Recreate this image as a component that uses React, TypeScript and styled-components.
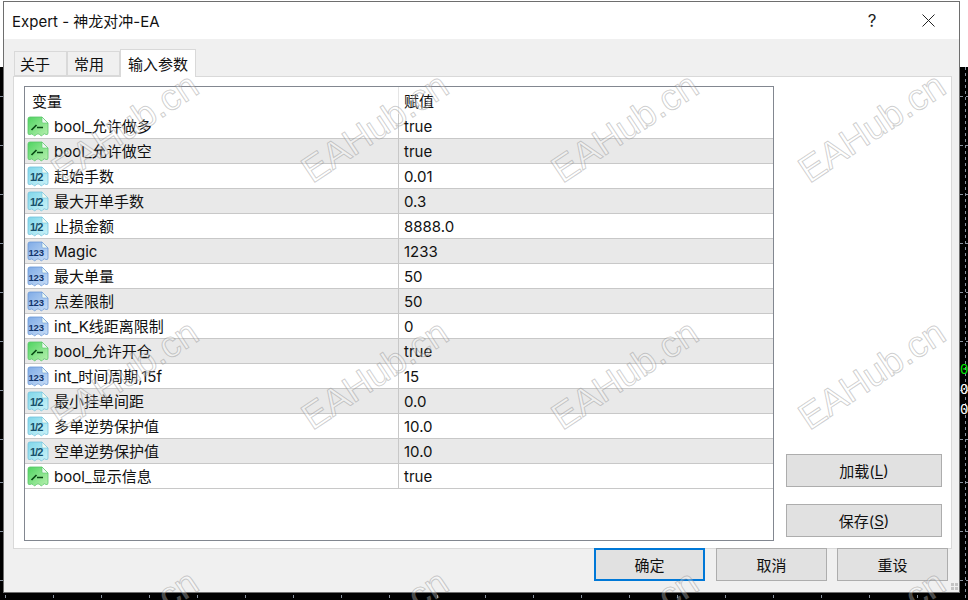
import React from "react";
import styled, { createGlobalStyle } from "styled-components";

const UI_FONT = `Inter, "Noto Sans CJK SC", sans-serif`;

const GlobalStyle = createGlobalStyle`
  html, body {
    margin: 0;
    padding: 0;
    width: 968px;
    height: 600px;
    overflow: hidden;
    background: #000;
  }
  * {
    box-sizing: border-box;
  }
`;

const Desktop = styled.div`
  position: relative;
  width: 968px;
  height: 600px;
  padding: 1px 8px 7px 3px;
  display: flex;
  overflow: hidden;
  background: linear-gradient(#fff 0 67px, #000 67px);
  font-family: ${UI_FONT};
`;

const ChartLayer = styled.svg`
  position: absolute;
  left: 0;
  top: 67px;
`;

const ChartLabel = styled.div<{ $color: string; $top: number }>`
  position: absolute;
  left: 960px;
  top: ${(p) => p.$top}px;
  color: ${(p) => p.$color};
  font: 14px "Liberation Mono", monospace;
  line-height: 16px;
`;

const Window = styled.div`
  position: relative;
  flex: 1;
  display: flex;
  flex-direction: column;
  background: #f0f0f0;
  border: 1px solid #6e6e6e;
`;

const TitleBar = styled.div`
  height: 37px;
  flex: none;
  display: flex;
  align-items: center;
  padding-left: 8px;
  background: #fff;
  color: #111;
  font-size: 15px;
`;

const Title = styled.div`
  flex: 1;
`;

const TitleButton = styled.div`
  width: 58px;
  height: 37px;
  display: flex;
  align-items: center;
  justify-content: center;
  color: #222;
  font-size: 17px;
  &:last-child {
    padding-right: 3px;
  }
`;

const Body = styled.div`
  flex: 1;
  display: flex;
  flex-direction: column;
  padding: 10px 0 0 9px;
`;

const TabStrip = styled.div`
  height: 27px;
  flex: none;
  display: flex;
  align-items: flex-end;
  padding-left: 1px;
`;

const Tab = styled.div<{ $active?: boolean; $width: number; $inset: number }>`
  position: relative;
  width: ${(p) => p.$width}px;
  height: ${(p) => (p.$active ? 28 : 25)}px;
  margin-bottom: ${(p) => (p.$active ? -1 : 0)}px;
  display: flex;
  align-items: center;
  padding-left: ${(p) => p.$inset}px;
  background: ${(p) => (p.$active ? "#fff" : "#f0f0f0")};
  border: 1px solid #d9d9d9;
  border-bottom: ${(p) => (p.$active ? "none" : "1px solid #d9d9d9")};
  color: #111;
  font-size: 15px;
  z-index: ${(p) => (p.$active ? 1 : 0)};
`;

const Panel = styled.div`
  width: 939px;
  height: 473px;
  flex: none;
  display: flex;
  gap: 12px;
  padding: 9px 9px 7px 10px;
  background: #fff;
  border: 1px solid #d9d9d9;
`;

const Table = styled.div`
  width: 750px;
  flex: none;
  display: flex;
  flex-direction: column;
  border: 1px solid #828790;
`;

const Row = styled.div<{ $shaded?: boolean; $header?: boolean }>`
  height: ${(p) => (p.$header ? 27 : 25)}px;
  flex: none;
  display: grid;
  grid-template-columns: 374px 1fr;
  background: ${(p) => (p.$shaded ? "#e9e9e9" : "#fff")};
  border-bottom: ${(p) => (p.$header ? "none" : "1px solid #c8c8c8")};
  color: #111;
  font-size: 15px;
  line-height: 22px;
`;

const NameCell = styled.div<{ $header?: boolean }>`
  display: flex;
  align-items: center;
  gap: 5px;
  padding-left: ${(p) => (p.$header ? 7 : 2)}px;
  border-right: ${(p) => (p.$header ? "1px solid #e5e5e5" : "1px solid #c8c8c8")};
  white-space: nowrap;
`;

const CellText = styled.span`
  padding-top: 2px;
`;

const ValueCell = styled.div`
  display: flex;
  align-items: center;
  padding-left: 5px;
`;

const SideColumn = styled.div`
  flex: 1;
  display: flex;
  flex-direction: column;
  justify-content: flex-end;
  gap: 17px;
  padding-bottom: 4px;
`;

const Button = styled.div<{ $default?: boolean }>`
  height: 33px;
  display: flex;
  align-items: center;
  justify-content: center;
  background: #e1e1e1;
  border: ${(p) => (p.$default ? "2px solid #0078d7" : "1px solid #adadad")};
  color: #111;
  font-size: 15px;
  u {
    text-underline-offset: 2px;
  }
`;

const Footer = styled.div`
  display: flex;
  justify-content: flex-end;
  gap: 11px;
  margin-top: -1px;
  padding-right: 11px;
  ${Button} {
    width: 111px;
  }
  ${Button}:last-child {
    margin-left: -1px;
  }
`;

const Grip = styled.svg`
  position: absolute;
  right: 0;
  bottom: 1px;
`;

const WatermarkLayer = styled.div`
  position: absolute;
  left: 0;
  top: 0;
  width: 968px;
  height: 600px;
  overflow: hidden;
  pointer-events: none;
`;

const Watermark = styled.div`
  position: absolute;
  transform: translate(-50%, -50%) rotate(-33.5deg);
  font: 37px "Liberation Sans", sans-serif;
  white-space: nowrap;
  color: rgba(255, 255, 255, 0.3);
  -webkit-text-stroke: 1px rgba(120, 120, 120, 0.36);
`;

type Kind = "bool" | "double" | "int";

const ICON_COLORS: Record<Kind, [string, string, string]> = {
  bool: ["#4fd461", "#b9f0b0", "#58c468"],
  double: ["#7fd6ea", "#cdf3f8", "#74c2dc"],
  int: ["#7fabe6", "#c9def7", "#6a98d6"],
};

const TypeIcon: React.FC<{ kind: Kind }> = ({ kind }) => {
  const [fill, light, edge] = ICON_COLORS[kind];
  const id = `icon-${kind}`;
  return (
    <svg width="22" height="21" viewBox="0 0 22 21" style={{ flex: "none" }}>
      <defs>
        <linearGradient id={id} x1="0" y1="0" x2="1" y2="1">
          <stop offset="0" stopColor={fill} />
          <stop offset="1" stopColor={light} />
        </linearGradient>
      </defs>
      <path
        d="M1 3 Q1 1 3 1 H15 L21 7 V17 Q21 19 19 18.5 Q17.5 17 16 18.5 L14.5 20 L12.5 18.5 Q11 17 9.5 18.5 L7.5 20 L6 18.5 Q4.5 17.5 3 18.5 Q1 19 1 17 Z"
        fill={`url(#${id})`}
        stroke={edge}
        strokeWidth="0.8"
      />
      <path d="M15 1 V6 Q15 7 16 7 H21 Z" fill="#eef9f2" stroke={edge} strokeWidth="0.6" />
      {kind === "bool" && (
        <path d="M4.5 14 L9.5 9 M10 11.5 H16" fill="none" stroke="#0a4a16" strokeWidth="1.7" />
      )}
      {kind === "double" && (
        <text x="3" y="14.5" fontSize="11" fontWeight="700" fontFamily="Liberation Sans" fill="#17506b" letterSpacing="-1">
          1/2
        </text>
      )}
      {kind === "int" && (
        <text x="1.5" y="15" fontSize="9.5" fontWeight="700" fontFamily="Liberation Sans" fill="#12336b" letterSpacing="-0.2">
          123
        </text>
      )}
    </svg>
  );
};

const PARAMS: { kind: Kind; name: string; value: string }[] = [
  { kind: "bool", name: "bool_允许做多", value: "true" },
  { kind: "bool", name: "bool_允许做空", value: "true" },
  { kind: "double", name: "起始手数", value: "0.01" },
  { kind: "double", name: "最大开单手数", value: "0.3" },
  { kind: "double", name: "止损金额", value: "8888.0" },
  { kind: "int", name: "Magic", value: "1233" },
  { kind: "int", name: "最大单量", value: "50" },
  { kind: "int", name: "点差限制", value: "50" },
  { kind: "int", name: "int_K线距离限制", value: "0" },
  { kind: "bool", name: "bool_允许开仓", value: "true" },
  { kind: "int", name: "int_时间周期,15f", value: "15" },
  { kind: "double", name: "最小挂单间距", value: "0.0" },
  { kind: "double", name: "多单逆势保护值", value: "10.0" },
  { kind: "double", name: "空单逆势保护值", value: "10.0" },
  { kind: "bool", name: "bool_显示信息", value: "true" },
];

const MARKS: [number, number][] = [125, 375, 625, 872].flatMap((x) =>
  [128, 375, 625].map((y) => [x, y] as [number, number])
);

const ChartGrid: React.FC = () => (
  <ChartLayer width="968" height="533">
    {[5, 53, 101, 149, 197, 245, 293, 341, 389, 437, 485, 533, 581, 629, 677, 725, 773, 821, 869, 917, 965].map((x) => (
      <line key={x} x1={x + 0.5} y1="0" x2={x + 0.5} y2="533" stroke="#8a93a0" strokeDasharray="3 3" />
    ))}
    {[29, 78, 127, 176, 225, 274, 323, 372, 415, 464, 513].map((y) => (
      <line key={y} x1="0" y1={y + 0.5} x2="968" y2={y + 0.5} stroke="#8a93a0" strokeDasharray="3 3" />
    ))}
  </ChartLayer>
);

export default function App() {
  return (
    <Desktop>
      <GlobalStyle />
      <ChartGrid />
      <ChartLabel $color="#00e600" $top={362}>0</ChartLabel>
      <ChartLabel $color="#fff" $top={382}>0</ChartLabel>
      <ChartLabel $color="#fff" $top={402}>0</ChartLabel>
      <Window>
        <TitleBar>
          <Title>Expert - 神龙对冲-EA</Title>
          <TitleButton>?</TitleButton>
          <TitleButton>
            <svg width="13" height="13" viewBox="0 0 13 13">
              <path d="M0.5 0.5 L12.5 12.5 M12.5 0.5 L0.5 12.5" stroke="#222" strokeWidth="1" fill="none" />
            </svg>
          </TitleButton>
        </TitleBar>
        <Body>
          <TabStrip>
            <Tab $width={53} $inset={5}>关于</Tab>
            <Tab $width={53} $inset={6}>常用</Tab>
            <Tab $active $width={76} $inset={7}>输入参数</Tab>
          </TabStrip>
          <Panel>
            <Table>
              <Row $header>
                <NameCell $header><CellText>变量</CellText></NameCell>
                <ValueCell><CellText>赋值</CellText></ValueCell>
              </Row>
              {PARAMS.map((p, i) => (
                <Row key={p.name + i} $shaded={i % 2 === 1}>
                  <NameCell>
                    <TypeIcon kind={p.kind} />
                    <CellText>{p.name}</CellText>
                  </NameCell>
                  <ValueCell><CellText>{p.value}</CellText></ValueCell>
                </Row>
              ))}
            </Table>
            <SideColumn>
              <Button>加载(<u>L</u>)</Button>
              <Button>保存(<u>S</u>)</Button>
            </SideColumn>
          </Panel>
          <Footer>
            <Button $default>确定</Button>
            <Button>取消</Button>
            <Button>重设</Button>
          </Footer>
        </Body>
        <Grip width="8" height="8" viewBox="0 0 8 8">
          <path d="M0 0h3v3H0zM4 0h3v3H4zM0 4h3v3H0zM4 4h3v3H4z" fill="#c4c4c4" />
        </Grip>
      </Window>
      <WatermarkLayer>
        {MARKS.map(([x, y]) => (
          <Watermark key={`${x}-${y}`} style={{ left: x, top: y }}>
            EAHub.cn
          </Watermark>
        ))}
      </WatermarkLayer>
    </Desktop>
  );
}
